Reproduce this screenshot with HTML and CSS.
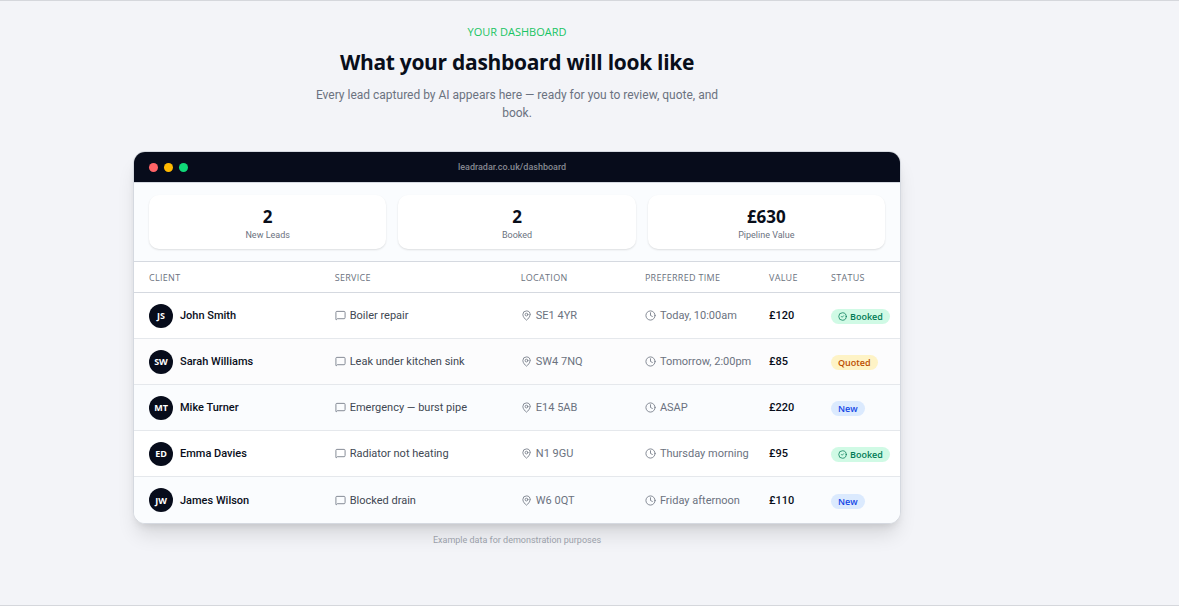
FILE: index.html
```html
<!DOCTYPE html>
<html lang="en">
<head>
    <meta charset="UTF-8">
    <meta name="viewport" content="width=device-width, initial-scale=1.0">
    <title>LeadRadar - Your Dashboard</title>
    <link rel="stylesheet" href="styles.css">
</head>
<body>
    <!-- Shared icons -->
    <svg class="sprite" aria-hidden="true">
        <symbol id="icon-message" viewBox="0 0 24 24">
            <path d="M22 17a2 2 0 0 1-2 2H5l-2 2.200a.6.6 0 0 1-1-.4V5a2 2 0 0 1 2-2h16a2 2 0 0 1 2 2z"/>
        </symbol>
        <symbol id="icon-pin" viewBox="0 0 24 24">
            <path d="M20 10c0 5-5.500 10.200-7.400 11.800a1 1 0 0 1-1.200 0C9.500 20.200 4 15 4 10a8 8 0 0 1 16 0"/>
            <circle cx="12" cy="10" r="3"/>
        </symbol>
        <symbol id="icon-clock" viewBox="0 0 24 24">
            <circle cx="12" cy="12" r="10"/>
            <path d="M12 6v6l4 2"/>
        </symbol>
        <symbol id="icon-check" viewBox="0 0 24 24">
            <circle cx="12" cy="12" r="10"/>
            <path d="m9 12 2 2 4-4"/>
        </symbol>
    </svg>

    <section class="preview">
        <div class="container">
            <header class="intro">
                <p class="eyebrow">YOUR DASHBOARD</p>
                <h1>What your dashboard will look like</h1>
                <p class="lead">Every lead captured by AI appears here — ready for you to review, quote, and book.</p>
            </header>

            <div class="window">
                <div class="window-bar">
                    <div class="dots">
                        <span class="dot red"></span>
                        <span class="dot yellow"></span>
                        <span class="dot green"></span>
                    </div>
                    <span class="address">leadradar.co.uk/dashboard</span>
                </div>

                <div class="stats">
                    <div class="stat">
                        <div class="stat-value">2</div>
                        <div class="stat-label">New Leads</div>
                    </div>
                    <div class="stat">
                        <div class="stat-value">2</div>
                        <div class="stat-label">Booked</div>
                    </div>
                    <div class="stat">
                        <div class="stat-value">£630</div>
                        <div class="stat-label">Pipeline Value</div>
                    </div>
                </div>

                <table class="leads">
                    <thead>
                        <tr>
                            <th class="col-client">CLIENT</th>
                            <th class="col-service">SERVICE</th>
                            <th class="col-location">LOCATION</th>
                            <th class="col-time">PREFERRED TIME</th>
                            <th class="col-value">VALUE</th>
                            <th class="col-status">STATUS</th>
                        </tr>
                    </thead>
                    <tbody>
                        <tr>
                            <td><div class="cell client"><span class="avatar">JS</span>John Smith</div></td>
                            <td><div class="cell service"><svg class="icon"><use href="#icon-message"/></svg>Boiler repair</div></td>
                            <td><div class="cell"><svg class="icon"><use href="#icon-pin"/></svg>SE1 4YR</div></td>
                            <td><div class="cell"><svg class="icon"><use href="#icon-clock"/></svg>Today, 10:00am</div></td>
                            <td><div class="cell value">£120</div></td>
                            <td><div class="cell status"><span class="badge booked"><svg class="icon"><use href="#icon-check"/></svg>Booked</span></div></td>
                        </tr>
                        <tr>
                            <td><div class="cell client"><span class="avatar">SW</span>Sarah Williams</div></td>
                            <td><div class="cell service"><svg class="icon"><use href="#icon-message"/></svg>Leak under kitchen sink</div></td>
                            <td><div class="cell"><svg class="icon"><use href="#icon-pin"/></svg>SW4 7NQ</div></td>
                            <td><div class="cell"><svg class="icon"><use href="#icon-clock"/></svg>Tomorrow, 2:00pm</div></td>
                            <td><div class="cell value">£85</div></td>
                            <td><div class="cell status"><span class="badge quoted">Quoted</span></div></td>
                        </tr>
                        <tr>
                            <td><div class="cell client"><span class="avatar">MT</span>Mike Turner</div></td>
                            <td><div class="cell service"><svg class="icon"><use href="#icon-message"/></svg>Emergency — burst pipe</div></td>
                            <td><div class="cell"><svg class="icon"><use href="#icon-pin"/></svg>E14 5AB</div></td>
                            <td><div class="cell"><svg class="icon"><use href="#icon-clock"/></svg>ASAP</div></td>
                            <td><div class="cell value">£220</div></td>
                            <td><div class="cell status"><span class="badge new">New</span></div></td>
                        </tr>
                        <tr>
                            <td><div class="cell client"><span class="avatar">ED</span>Emma Davies</div></td>
                            <td><div class="cell service"><svg class="icon"><use href="#icon-message"/></svg>Radiator not heating</div></td>
                            <td><div class="cell"><svg class="icon"><use href="#icon-pin"/></svg>N1 9GU</div></td>
                            <td><div class="cell"><svg class="icon"><use href="#icon-clock"/></svg>Thursday morning</div></td>
                            <td><div class="cell value">£95</div></td>
                            <td><div class="cell status"><span class="badge booked"><svg class="icon"><use href="#icon-check"/></svg>Booked</span></div></td>
                        </tr>
                        <tr>
                            <td><div class="cell client"><span class="avatar">JW</span>James Wilson</div></td>
                            <td><div class="cell service"><svg class="icon"><use href="#icon-message"/></svg>Blocked drain</div></td>
                            <td><div class="cell"><svg class="icon"><use href="#icon-pin"/></svg>W6 0QT</div></td>
                            <td><div class="cell"><svg class="icon"><use href="#icon-clock"/></svg>Friday afternoon</div></td>
                            <td><div class="cell value">£110</div></td>
                            <td><div class="cell status"><span class="badge new">New</span></div></td>
                        </tr>
                    </tbody>
                </table>
            </div>

            <p class="note">Example data for demonstration purposes</p>
        </div>
    </section>
</body>
</html>
```
FILE: styles.css
```css
* {
    box-sizing: border-box;
}
body {
    margin: 0;
    font-family: Roboto, "Open Sans", sans-serif;
    background-color: #f3f4f8;
    color: #090e1a;
}
h1, p {
    margin: 0;
}
.sprite {
    display: none;
}
.preview {
    min-height: 100vh;
    padding: 22px 0 48px;
    border-top: 1px solid #d5d7dc;
    border-bottom: 1px solid #d5d7dc;
}
.container {
    max-width: 1034px;
    padding: 0 24px;
}
.intro {
    max-width: 430px;
    margin: 0 auto 29px;
    text-align: center;
}
.eyebrow {
    font-family: "Open Sans", sans-serif;
    font-size: 11px;
    line-height: 18px;
    font-weight: 500;
    color: #19c463;
}
h1 {
    margin: 5px 0 7px;
    font-family: "Open Sans", sans-serif;
    font-size: 21px;
    line-height: 33px;
    font-weight: 700;
    letter-spacing: -0.3px;
    white-space: nowrap;
}
.lead {
    font-size: 12px;
    line-height: 18px;
    color: #6b7280;
}

/* Browser window */
.window {
    max-width: 768px;
    margin: 0 auto;
    border: 1px solid #d5d9e0;
    border-radius: 12px;
    background: #ffffff;
    overflow: hidden;
    box-shadow: 0 14px 20px -4px rgba(0, 0, 0, 0.12), 0 5px 8px -4px rgba(0, 0, 0, 0.12);
}
.window-bar {
    display: grid;
    grid-template-columns: 1fr auto 1fr;
    align-items: center;
    height: 30px;
    padding: 0 15px;
    background-color: #070c1b;
}
.dots {
    display: flex;
    gap: 6px;
}
.dot {
    width: 9px;
    height: 9px;
    border-radius: 50%;
}
.dot.red {
    background-color: #ff6467;
}
.dot.yellow {
    background-color: #ffb900;
}
.dot.green {
    background-color: #10d978;
}
.address {
    margin-right: 10px;
    font-size: 9px;
    line-height: 12px;
    font-weight: 500;
    color: #858891;
}

/* Stats */
.stats {
    display: grid;
    grid-template-columns: repeat(3, 1fr);
    gap: 12px;
    padding: 12px 15px;
    border-top: 1px solid #d5d9e0;
    border-bottom: 1px solid #d5d9e0;
    background-color: #fafcfe;
}
.stat {
    padding: 11px 12px 7px;
    border-radius: 10px;
    background-color: #ffffff;
    text-align: center;
    box-shadow: 0 1px 2px rgba(0, 0, 0, 0.12);
}
.stat-value {
    font-family: "Open Sans", sans-serif;
    font-size: 17px;
    line-height: 21px;
    font-weight: 700;
}
.stat-label {
    margin-top: 1px;
    font-size: 9px;
    line-height: 14px;
    color: #6b7280;
}

/* Leads table */
.leads {
    width: 100%;
    table-layout: fixed;
    border-collapse: separate;
    border-spacing: 0;
}
.leads th, .leads td {
    padding: 0;
    text-align: left;
    white-space: nowrap;
}
.leads th {
    height: 31px;
    border-bottom: 1px solid #d5d9e0;
    font-family: "Open Sans", sans-serif;
    font-size: 9px;
    font-weight: 500;
    letter-spacing: 0.3px;
    color: #6b7280;
}
.leads th:first-child, .leads td:first-child {
    padding-left: 15px;
}
.col-client {
    width: 26.2%;
}
.col-service {
    width: 24.3%;
}
.col-location, .col-time {
    width: 16.2%;
}
.col-value {
    width: 8.1%;
}
.leads td {
    height: 46px;
    border-bottom: 1px solid #e5e8ec;
    font-size: 11px;
    color: #6b7280;
}
.leads tbody tr:last-child td {
    border-bottom: none;
}
.leads tbody tr:nth-child(2) {
    background-color: #fcfcfd;
}
.leads tbody tr:nth-child(3), .leads tbody tr:nth-child(5) {
    background-color: #fafcfe;
}
.cell {
    display: flex;
    align-items: center;
    gap: 4px;
}
.client {
    gap: 7px;
    font-weight: 500;
    color: #090e1a;
}
.service {
    color: #414853;
}
.value {
    font-weight: 500;
    color: #090e1a;
}
.avatar {
    display: flex;
    align-items: center;
    justify-content: center;
    width: 24px;
    height: 24px;
    border-radius: 50%;
    background-color: #070c1b;
    color: #ffffff;
    font-family: "Open Sans", sans-serif;
    font-size: 9px;
    font-weight: 700;
}
.icon {
    flex: none;
    width: 11px;
    height: 11px;
    fill: none;
    stroke: #7b818c;
    stroke-width: 2;
    stroke-linecap: round;
    stroke-linejoin: round;
}
.status {
    padding-top: 2px;
}
.badge {
    display: inline-flex;
    align-items: center;
    gap: 3px;
    height: 15px;
    padding: 0 7px;
    border-radius: 8px;
    font-family: "Open Sans", sans-serif;
    font-size: 9px;
    font-weight: 600;
}
.badge .icon {
    width: 9px;
    height: 9px;
    stroke: currentColor;
}
.booked {
    background-color: #d0fae5;
    color: #007a55;
}
.quoted {
    background-color: #fef3c6;
    color: #bb4d00;
}
.new {
    background-color: #dbeafe;
    color: #1447e6;
}
.note {
    margin-top: 9px;
    font-size: 9px;
    line-height: 14px;
    text-align: center;
    color: #9a9fa9;
}
```
